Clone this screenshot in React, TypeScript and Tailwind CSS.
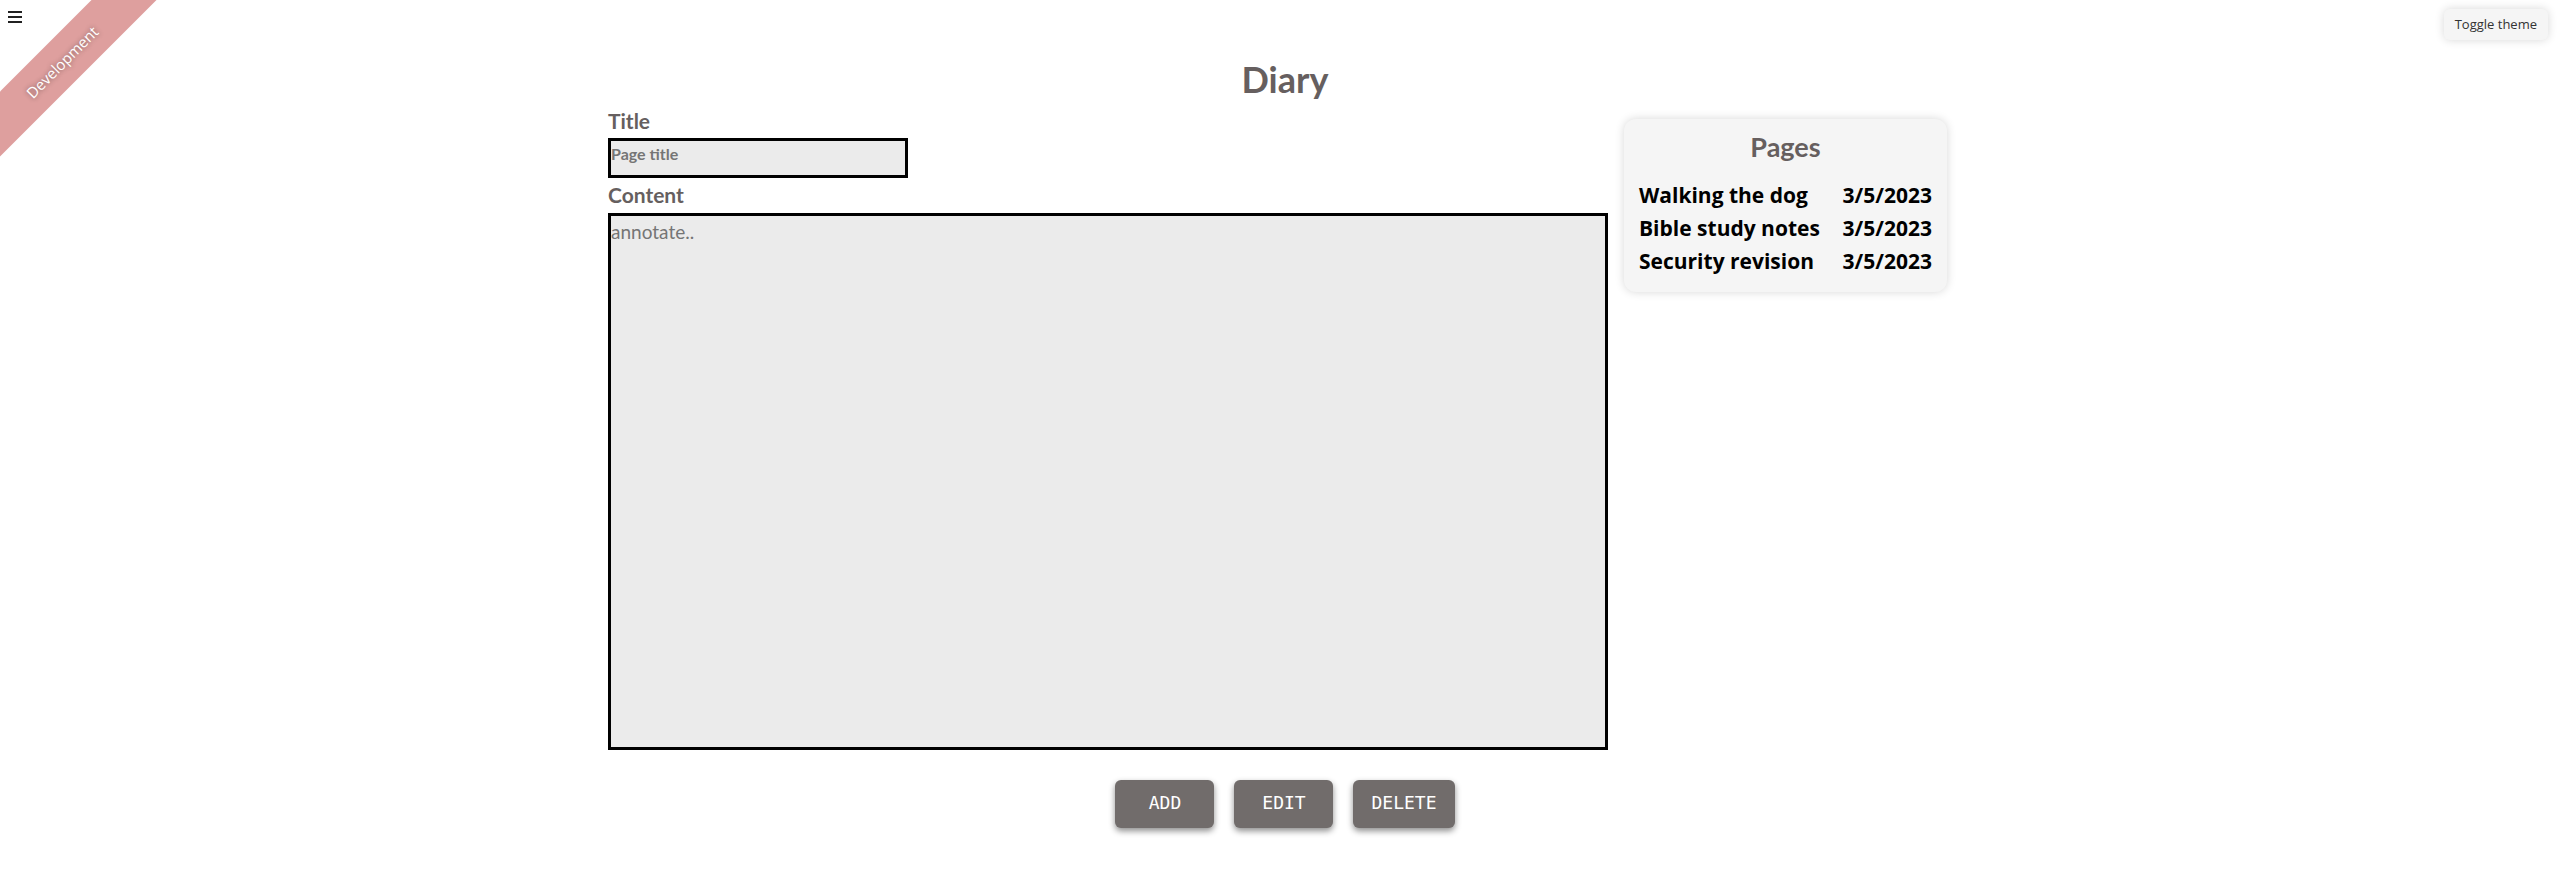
const pages = [
  { title: 'Walking the dog', date: '3/5/2023' },
  { title: 'Bible study notes', date: '3/5/2023' },
  { title: 'Security revision', date: '3/5/2023' },
];

const actions = ['ADD', 'EDIT', 'DELETE'];

function MenuIcon() {
  return (
    <svg width="14" height="12" viewBox="0 0 14 12" fill="#212121" aria-hidden="true" shapeRendering="crispEdges">
      <path d="M0 0h14v2H0zM0 5h14v2H0zM0 10h14v2H0z" />
    </svg>
  );
}

export default function App() {
  return (
    <div className="relative overflow-hidden bg-white pb-16 font-['Lato',sans-serif] text-[#665f5f]">
      <header className="flex h-14 items-start justify-between pt-[9px] pr-[10px] pl-2">
        <button type="button" aria-label="Open menu" className="pt-[2px]">
          <MenuIcon />
        </button>
        <button
          type="button"
          className="h-[31px] rounded-md bg-[#f5f5f5] px-[11px] font-['Open_Sans',sans-serif] text-[13px] text-[#333333] shadow-[0_0_10px_rgba(0,0,0,0.16)]"
        >
          Toggle theme
        </button>
      </header>
      <div className="pointer-events-none absolute -top-[38px] -left-[38px] flex h-[200px] w-[200px] items-center justify-center">
        <div className="flex h-[46px] w-[300px] shrink-0 -rotate-45 items-center justify-center bg-[#de9f9e] font-['Open_Sans',sans-serif] text-[15px] font-medium text-white [text-shadow:0_0_5px_rgba(0,0,0,0.45)]">
          Development
        </div>
      </div>

      <main className="flex flex-col items-center pl-3">
        <h1 className="text-[36px] leading-[47px] font-bold">Diary</h1>
        <div className="flex w-full max-w-[1354px] items-start gap-4 pt-px pr-[15px]">
          <form className="flex min-w-0 flex-1 flex-col items-start">
            <label htmlFor="title" className="pt-[2px] pb-[2px] text-[21px] leading-[30px] font-bold">
              Title
            </label>
            <input
              id="title"
              placeholder="Page title"
              className="h-10 w-[300px] border-3 border-black bg-[#ebebeb] pb-[9px] text-base font-bold outline-none placeholder:text-[#757575]"
            />
            <label htmlFor="content" className="pt-[2px] pb-[3px] text-[21px] leading-[30px] font-bold">
              Content
            </label>
            <textarea
              id="content"
              placeholder="annotate.."
              className="h-[537px] w-full resize-none border-3 border-black bg-[#ebebeb] pt-1 text-[19px] leading-6 outline-none placeholder:text-[#757575]"
            />
          </form>
          <aside className="mt-[15px] w-[323px] rounded-xl bg-[#f5f5f5] px-[15px] pt-2 pb-[14px] shadow-[0_0_10px_rgba(0,0,0,0.16)]">
            <h2 className="mb-[13px] text-center text-[27px] leading-[39px] font-bold">Pages</h2>
            <table className="w-full font-['Open_Sans',sans-serif] text-[21px] leading-[33px] font-bold whitespace-nowrap text-black">
              <tbody>
                {pages.map((page) => (
                  <tr key={page.title}>
                    <td className="p-0">{page.title}</td>
                    <td className="p-0 text-right">{page.date}</td>
                  </tr>
                ))}
              </tbody>
            </table>
          </aside>
        </div>
        <div className="mt-[30px] flex gap-5">
          {actions.map((action) => (
            <button
              key={action}
              type="button"
              className="h-12 min-w-[99px] rounded-md bg-[#716c6b] px-[18px] pb-[2px] font-['DejaVu_Sans_Mono',monospace] text-lg text-white shadow-[0_3px_6px_rgba(0,0,0,0.45)]"
            >
              {action}
            </button>
          ))}
        </div>
      </main>
    </div>
  );
}
